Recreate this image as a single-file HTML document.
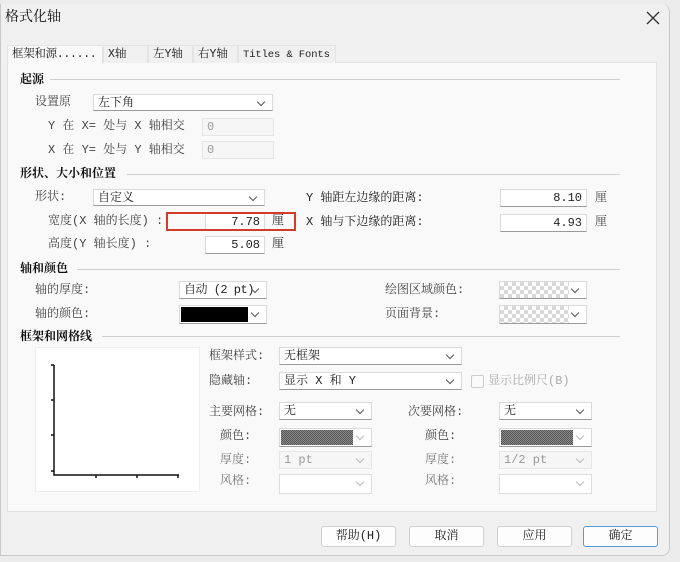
<!DOCTYPE html>
<html><head><meta charset="utf-8"><style>
*{margin:0;padding:0;box-sizing:border-box}
body{width:680px;height:562px;overflow:hidden;background:#ececec;position:relative;font-family:"Liberation Mono","Noto Serif CJK SC",serif;font-size:12px;color:#222}
.a{position:absolute;white-space:nowrap;line-height:14px}
.dlg{position:absolute;left:0;top:4px;width:670px;height:552px;background:#f0f0f0;border:1px solid #c8c8c8;border-top:none;border-radius:0 8px 8px 0}
.panel{position:absolute;left:7px;top:62px;width:650px;height:450px;background:#f9f9f9;border:1px solid #e2e2e2}
.tab{position:absolute;top:45px;height:18px;background:#f0f0f0;border:1px solid #e4e4e4;border-bottom:none;padding:2px 0 0 4px;line-height:14px;white-space:nowrap;overflow:hidden;font-size:11.5px}
.b{font-weight:bold;color:#111}
.ln{position:absolute;height:1px;background:#cfcfcf}
.in{position:absolute;background:#fff;border:1px solid #dadada;border-bottom-color:#9a9a9a;line-height:14px;padding:1px 4px;white-space:nowrap;overflow:hidden}
.dis{background:#f6f6f6;border-color:#e6e6e6;color:#999}
.sel::after{content:"";position:absolute;right:8px;top:4px;width:5px;height:5px;border-right:1px solid #555;border-bottom:1px solid #555;transform:rotate(45deg)}
.sel.g::after{border-color:#bbb}
.r{text-align:right}
.btn{position:absolute;top:526px;width:75px;height:21px;background:#fdfdfd;border:1px solid #d0d0d0;border-radius:3px;text-align:center;line-height:19px}
.chk{background:repeating-conic-gradient(#d8d8d8 0 25%,#fff 0 50%) 0 0/8px 8px}
.hat{background:repeating-conic-gradient(#555 0 25%,#8a8a8a 0 50%) 0 0/2px 2px}
.gr{color:#444}
</style></head><body>
<div class="dlg"></div>
<div class="a" style="left:5px;top:11px;font-size:14px;color:#111">格式化轴</div>
<svg class="a" style="left:646px;top:11px" width="14" height="14"><path d="M1 1L13 13M13 1L1 13" stroke="#333" stroke-width="1.3"/></svg>
<div class="panel"></div>
<div class="tab" style="left:7px;width:96px;height:19px;background:#f9f9f9;z-index:2;letter-spacing:-0.3px">框架和源......</div>
<div class="tab" style="left:103px;width:45px">X轴</div>
<div class="tab" style="left:148px;width:45px">左Y轴</div>
<div class="tab" style="left:193px;width:45px">右Y轴</div>
<div class="tab" style="left:238px;width:98px;font-size:10.5px;letter-spacing:-0.1px">Titles &amp; Fonts</div>

<div class="a b" style="left:20px;top:73px">起源</div><div class="ln" style="left:50px;top:79px;width:570px"></div>
<div class="a gr" style="left:35px;top:95px">设置原</div>
<div class="in sel" style="left:93px;top:94px;width:180px;height:17px">左下角</div>
<div class="a gr" style="left:48px;top:119px">Y 在 X= 处与 X 轴相交</div>
<div class="in dis" style="left:202px;top:118px;width:72px;height:18px">0</div>
<div class="a gr" style="left:48px;top:143px">X 在 Y= 处与 Y 轴相交</div>
<div class="in dis" style="left:202px;top:141px;width:72px;height:18px">0</div>

<div class="a b" style="left:20px;top:167px">形状、大小和位置</div><div class="ln" style="left:127px;top:174px;width:493px"></div>
<div class="a gr" style="left:35px;top:190px">形状:</div>
<div class="in sel" style="left:93px;top:189px;width:172px;height:17px">自定义</div>
<div class="a gr" style="left:48px;top:214px">宽度(X 轴的长度) :</div>
<div class="in r" style="left:205px;top:213px;width:60px;height:17px">7.78</div>
<div class="a" style="left:272px;top:214px">厘</div>
<div class="a" style="left:166px;top:212px;width:130px;height:19px;border:2px solid #d23a2a"></div>
<div class="a gr" style="left:48px;top:237px">高度(Y 轴长度) :</div>
<div class="in r" style="left:205px;top:236px;width:60px;height:18px">5.08</div>
<div class="a" style="left:272px;top:237px">厘</div>
<div class="a" style="left:306px;top:191px">Y 轴距左边缘的距离:</div>
<div class="in r" style="left:500px;top:189px;width:87px;height:18px">8.10</div>
<div class="a gr" style="left:595px;top:191px">厘</div>
<div class="a" style="left:306px;top:215px">X 轴与下边缘的距离:</div>
<div class="in r" style="left:500px;top:214px;width:87px;height:18px">4.93</div>
<div class="a gr" style="left:595px;top:215px">厘</div>

<div class="a b" style="left:20px;top:262px">轴和颜色</div><div class="ln" style="left:77px;top:269px;width:543px"></div>
<div class="a gr" style="left:35px;top:283px">轴的厚度:</div>
<div class="in sel" style="left:179px;top:281px;width:88px;height:18px;letter-spacing:-0.5px">自动 (2 pt)</div>
<div class="a gr" style="left:35px;top:307px">轴的颜色:</div>
<div class="in sel" style="left:179px;top:305px;width:88px;height:19px;padding:0"><div style="position:absolute;left:1px;top:1px;width:67px;height:15px;background:#000"></div></div>
<div class="a gr" style="left:385px;top:283px">绘图区域颜色:</div>
<div class="in sel chk" style="left:499px;top:281px;width:88px;height:18px;padding:0"><div style="position:absolute;right:0;top:0;width:17px;height:16px;background:#fff"></div></div>
<div class="a gr" style="left:385px;top:307px">页面背景:</div>
<div class="in sel chk" style="left:499px;top:305px;width:88px;height:19px;padding:0"><div style="position:absolute;right:0;top:0;width:17px;height:17px;background:#fff"></div></div>

<div class="a b" style="left:20px;top:330px">框架和网格线</div><div class="ln" style="left:102px;top:336px;width:518px"></div>
<div class="a" style="left:35px;top:347px;width:165px;height:145px;background:#fff;border:1px solid #eee"></div>
<svg class="a" style="left:35px;top:347px" width="165" height="145"><path d="M19 18V128H144M16 18H19M16 53H19M16 88H19M16 124H19M61 128V131M102 128V131M143 128V131" stroke="#111" stroke-width="1.5" fill="none"/></svg>
<div class="a gr" style="left:209px;top:349px">框架样式:</div>
<div class="in sel" style="left:279px;top:347px;width:183px;height:18px">无框架</div>
<div class="a gr" style="left:209px;top:374px">隐藏轴:</div>
<div class="in sel" style="left:279px;top:372px;width:183px;height:18px">显示 X 和 Y</div>
<div class="a" style="left:471px;top:375px;width:13px;height:13px;border:1px solid #ccc;border-radius:2px;background:#fafafa"></div>
<div class="a" style="left:488px;top:374px;color:#aaa">显示比例尺(B)</div>
<div class="a gr" style="left:209px;top:405px">主要网格:</div>
<div class="in sel" style="left:279px;top:402px;width:93px;height:18px">无</div>
<div class="a gr" style="left:408px;top:405px">次要网格:</div>
<div class="in sel" style="left:499px;top:402px;width:93px;height:18px">无</div>
<div class="a gr" style="left:220px;top:429px">颜色:</div>
<div class="in sel g" style="left:279px;top:428px;width:93px;height:19px;padding:0"><div class="hat" style="position:absolute;left:1px;top:1px;width:72px;height:15px"></div></div>
<div class="a gr" style="left:425px;top:429px">颜色:</div>
<div class="in sel g" style="left:499px;top:428px;width:93px;height:19px;padding:0"><div class="hat" style="position:absolute;left:1px;top:1px;width:72px;height:15px"></div></div>
<div class="a gr" style="left:220px;top:453px;color:#777">厚度:</div>
<div class="in sel g dis" style="left:279px;top:451px;width:93px;height:18px">1 pt</div>
<div class="a gr" style="left:425px;top:453px;color:#777">厚度:</div>
<div class="in sel g dis" style="left:499px;top:451px;width:93px;height:18px">1/2 pt</div>
<div class="a gr" style="left:220px;top:474px;color:#777">风格:</div>
<div class="in sel g" style="left:279px;top:474px;width:93px;height:20px;border-color:#ddd"></div>
<div class="a gr" style="left:425px;top:474px;color:#777">风格:</div>
<div class="in sel g" style="left:499px;top:474px;width:93px;height:20px;border-color:#ddd"></div>

<div class="btn" style="left:321px">帮助(H)</div>
<div class="btn" style="left:409px">取消</div>
<div class="btn" style="left:497px">应用</div>
<div class="btn" style="left:583px;border-color:#5a9ad6">确定</div>
</body></html>
